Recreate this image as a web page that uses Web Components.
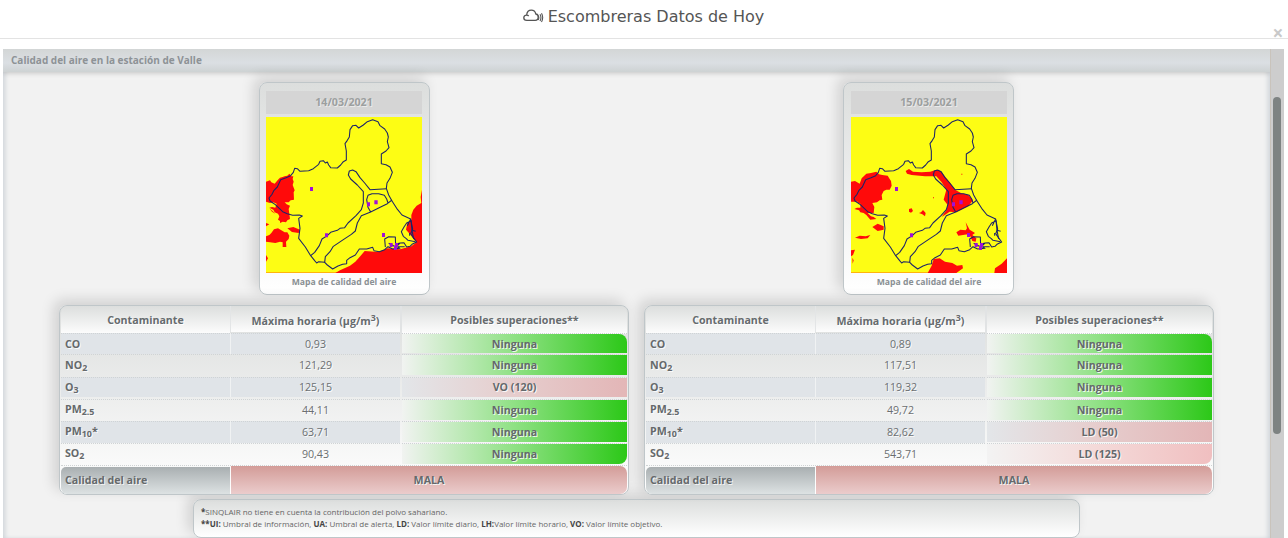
<!DOCTYPE html>
<html lang="es"><head><meta charset="utf-8"><title>Escombreras Datos de Hoy</title>
<style>
html,body{margin:0;height:100%;overflow:hidden;background:#fff}
body{font:10.67px "Open Sans","Noto Sans",sans-serif;color:#666}
</style></head><body>
<aq-dialog>
  <span slot="title">Escombreras Datos de Hoy</span>
  <aq-panel>
    <span slot="heading">Calidad del aire en la estación de Valle</span>
    <aq-columns>
      <aq-day date="14/03/2021" map="a">
        <aq-row h="21" label="CO" value="0,93" first>Ninguna</aq-row>
        <aq-row h="23" end="2" label="NO" sub="2" value="121,29">Ninguna</aq-row>
        <aq-row h="22" end="2" label="O" sub="3" value="125,15" tone="pink" odd up>VO (120)</aq-row>
        <aq-row h="22" label="PM" sub="2.5" value="44,11">Ninguna</aq-row>
        <aq-row h="22" label="PM" sub="10" star value="63,71" odd>Ninguna</aq-row>
        <aq-row h="22" label="SO" sub="2" value="90,43" last>Ninguna</aq-row>
      </aq-day>
      <aq-day date="15/03/2021" map="b">
        <aq-row h="21" label="CO" value="0,89" first>Ninguna</aq-row>
        <aq-row h="23" end="2" label="NO" sub="2" value="117,51">Ninguna</aq-row>
        <aq-row h="22" end="2" label="O" sub="3" value="119,32" odd up>Ninguna</aq-row>
        <aq-row h="22" label="PM" sub="2.5" value="49,72">Ninguna</aq-row>
        <aq-row h="22" label="PM" sub="10" star value="82,62" tone="pink" odd>LD (50)</aq-row>
        <aq-row h="22" label="SO" sub="2" value="543,71" tone="rose" last>LD (125)</aq-row>
      </aq-day>
    </aq-columns>
    <aq-note></aq-note>
  </aq-panel>
</aq-dialog>
<script>
const define=(name,render)=>customElements.define(name,class extends HTMLElement{
  connectedCallback(){ if(!this.shadowRoot) this.attachShadow({mode:'open'}).innerHTML=render(this); }
});

define('aq-dialog',()=>`<style>
:host{display:flex;flex-direction:column;height:538px;width:1288px;overflow:hidden;position:relative}
header{height:38px;flex:none;border-bottom:1px solid #e3e3e3;display:flex;justify-content:center;font:16px/34px "DejaVu Sans",sans-serif;color:#555;padding-right:2px;box-sizing:content-box}
header svg{width:21px;height:14px;margin:9px 4px 0 1px;flex:none}
.close{position:absolute;right:3px;top:24px;width:14px;height:19px;font:700 19px/19px "Open Sans",sans-serif;color:#c9c9c9;text-align:center}
.body{display:flex;flex:1;min-height:0;margin:10px 4px 0 3px}
.track{flex:none;width:13px;background:#cdcdcd;border-left:1px solid #c9c3bb}
.thumb{width:8px;height:337px;margin:48px 0 0 2px;border-radius:4px;background:#7e8382}
::slotted(aq-panel){flex:1;min-width:0}
</style><header><svg viewBox="0 0 21 14" fill="none" stroke="#555" stroke-width="1.3"><path d="M3.8 11.4C1.8 11.4.8 10.2.8 8.8C.8 7.1 2 6.2 3.6 6.1C4 3 5.900 1.200 8.300 1.200C10.700 1.200 12.300 2.700 12.800 5C14.500 5.100 15.200 6.400 15.200 8C15.200 10.100 14.200 11.400 12.200 11.400ZM3.600 6.100C4.500 6 5.200 6.400 5.700 7"/><path d="M15.200 6.400Q16.500 8.700 15.200 11M17 5.300Q18.900 8.700 17 12M18.500 4.300Q20.900 8.500 18.500 13" stroke-width="1.100"/></svg><slot name="title"></slot></header>
<div class="close">×</div><div class="body"><slot></slot><div class="track"><div class="thumb"></div></div></div>`);

define('aq-panel',()=>`<style>
:host{display:block;background:#f2f2f2;box-shadow:inset 4px 0 5px -2px #cdd3d8,inset -4px 0 5px -2px #cdd3d8;height:489px;overflow:hidden}
.h{height:23px;padding-left:8px;font:700 10px/23px "Open Sans",sans-serif;color:#8d9296;background:linear-gradient(#d3d6d6,#dbdfe3 60%,#cdd2d3);box-shadow:0 1px 5px rgba(0,0,0,.2);white-space:nowrap}
</style><div class="h"><slot name="heading"></slot></div><slot></slot>`);

define('aq-columns',()=>`<style>:host{display:grid;grid-template-columns:570px 570px;column-gap:15px;margin:10px 0 0 56px}</style><slot></slot>`);

define('aq-day',e=>`<style>
:host{display:block}
.card,.tbl{box-sizing:border-box;border:1px solid #bfc6c9;border-radius:8px;background:linear-gradient(#dcdedd,#fff);box-shadow:-5px -5px 14px rgba(0,0,0,.14)}
.card{width:171px;height:213px;margin-left:${e.getAttribute('map')=='a'?200:199}px;padding:8px 0 0 ${e.getAttribute('map')=='a'?6:7}px}
.date{width:156px;height:23px;background:#d5d5d5;text-align:center;font:700 10.67px/22px "Open Sans",sans-serif;color:#9c9f9f;text-shadow:1px 1px #eaeaea;margin-bottom:3px}
.cap{width:156px;text-align:center;font:700 8.64px/18px "Open Sans",sans-serif;color:#8a9094}
.tbl{margin-top:10px;height:190px;padding:0 1px;background:linear-gradient(#dcdedd,#fff)}
.th{display:grid;grid-template-columns:169px 169px 225px;column-gap:1px;height:26px;margin-bottom:1px;font:700 10.67px/28px "Open Sans",sans-serif;color:#666b6e;text-align:center;text-shadow:1px 1px #fff;white-space:nowrap}
.th>*{background:linear-gradient(#dcdedd,#fdfdfd)}
.th>:nth-child(1){border-radius:7px 0 0 0}
.th>:nth-child(2){padding-top:1px;box-sizing:border-box;height:26px;box-shadow:-1px 0 #e3e5e6}
.th>:nth-child(3){margin-left:1px;margin-right:-1px;border-radius:0 7px 0 0;box-shadow:-2px 0 #e1e3e4}
sup{font-size:8.9px;line-height:0;vertical-align:4px}
.foot{display:grid;grid-template-columns:169px 396px;column-gap:1px;height:28px;box-sizing:border-box;border-top:1px dotted #cfd3d4;font:700 10.67px/28px "Open Sans",sans-serif;color:#65696b;text-shadow:1px 1px #f3f3f3}
.foot>:first-child{padding-left:4px;margin-top:1px;line-height:26px;border-radius:5px 0 0 6px;background:linear-gradient(#a9afb1,#dde2e3)}
.foot>:last-child{text-align:center;border-radius:0 7px 7px 0;background:linear-gradient(#d39c98,#ebcccc)}
</style>
<div class="card"><div class="date">${e.getAttribute('date')}</div><aq-map kind="${e.getAttribute('map')}"></aq-map><div class="cap">Mapa de calidad del aire</div></div>
<div class="tbl"><div class="th"><div>Contaminante</div><div>Máxima horaria (µg/m<sup>3</sup>)</div><div>Posibles superaciones**</div></div>
<slot></slot><div class="foot"><div>Calidad del aire</div><div>MALA</div></div></div>`);

define('aq-row',e=>{
  const a=n=>e.getAttribute(n)||'', odd=e.hasAttribute('odd')||e.hasAttribute('first');
  const c={pink:'#e3e6e9,#e6cfcf 45%,#e3b6b7',rose:'#f3f3f3,#f4d9d8 50%,#f0bfc0'}[a('tone')]||'#f1f3f1,#8fe184 50%,#2cc818';
  const radius=e.hasAttribute('first')?'0 8px 0 0':e.hasAttribute('last')?'0 0 8px 0':'0';
  const up=e.hasAttribute('up')?18:20;
  return `<style>
:host{display:grid;grid-template-columns:169px 169px 225px;column-gap:1px;height:${a('h')}px;line-height:${up}px;color:#6b6f71;white-space:nowrap}
div{box-sizing:border-box;border-top:1px dotted #cfd3d5;text-shadow:1px 1px rgba(255,255,255,.85)}
.l,.v{${odd?'background:#e0e4e8;margin-bottom:'+(a('end')||'0')+'px;':''}}
.l{padding-left:4px;font-weight:700;color:#65696b;${e.hasAttribute('sub')&&!e.hasAttribute('up')&&a('h')=='22'?'line-height:19px;':''}}
.v{text-align:center;${odd?'box-shadow:-1px 0 #f0f2f3':''}}
.s{margin:0 -1px 0 1px;text-align:center;font-weight:700;color:#65696b}
.s span{display:block;height:${a('h')-1-(a('end')||1)}px;background:linear-gradient(90deg,${c});border-radius:${radius}}
sub{font-size:8.9px;line-height:0;vertical-align:-2px}
</style><div class="l">${a('label')}${a('sub')?`<sub>${a('sub')}</sub>`:''}${e.hasAttribute('star')?'*':''}</div><div class="v">${a('value')}</div><div class="s"><span><slot></slot></span></div>`;
});

/* Region of Murcia: shared outlines, with the polluted areas of each day beneath */
const areas={
a:`M48 320L60 316 64 322 74 326 84 314 90 308 98 306 104 304 112 302 118 296 124 304 130 304 128 312 131 320 128 330 134 346 131 352 132 374 122 376 116 382 104 382 110 388 120 392 116 402 118 416 120 432 112 436 108 442 98 440 90 444 90 438 84 434 88 424 84 416 74 412 70 404 58 398 66 396 76 398 80 386 70 382 60 384 48 380Z
M48 484L58 480 64 474 72 463 84 460 94 466 104 472 112 472 118 482 116 492 108 500 109 516 98 516 98 502 90 500 76 504 60 502 48 500Z M112 460L130 456 150 464 146 474 126 471Z M48 444L58 448 48 454Z M48 540L54 550 48 560ZM58 400L70 410 76 416 66 410Z
M516 344L512 366 514 384 500 392 490 404 484 420 484 434 472 444 468 464 480 478 492 494 500 502 484 514 450 523 412 520 385 531 344 528 332 542 316 560 300 572 270 586 256 594 516 594Z`,
b:`M48 320L60 318 74 326 80 310 94 296 108 294 124 290 132 298 142 300 158 302 164 312 168 318 170 332 164 344 154 344 146 348 140 360 142 374 134 376 126 382 112 384 118 396 116 414 98 414 108 424 116 426 124 432 106 434 94 420 86 414 76 412 72 406 58 402 66 398 76 398 76 386 68 384 70 380 48 380Z
M112 456L128 446 146 454 146 464 128 468ZM60 488L74 482 92 484 106 480 98 490 78 492ZM48 526L60 524 54 540 48 544ZM52 548l4 8-3 10zM222 402L230 400 234 408 228 413 222 410ZM252 414L258 412 264 405 272 414 270 424 262 418Z
M212 288L222 282 234 290 260 292 286 290 304 284 318 288 328 302 346 324 360 344 378 354 400 360 414 376 400 394 364 412 344 410 320 426 334 406 338 390 326 374 334 344 320 322 304 304 270 304 230 300 216 296Z
M364 472L376 464 392 466 396 460 392 442 404 464 420 474 412 480 424 490 422 500 412 498 406 484 398 478 370 482Z M278 594L290 572 296 552 314 550 330 560 352 564 366 572 382 570 384 580 364 594ZM478 594L480 580 500 566 516 550 516 594Z M379 296h3v3h-3zM294 367h3v3h-3z`};
define('aq-map',e=>`<style>:host{display:block;width:156px;height:156px}svg{display:block}</style>
<svg width="156" height="156" viewBox="48 126 468 468"><rect x="48" y="123" width="468" height="471" fill="#fdfd14"/>
<path d="M48 593H300" stroke="#ffa60a" stroke-width="3"/><path d="${areas[e.getAttribute('kind')]}" fill="#ff0a0a"/>
<g fill="none" stroke="#1c2468" stroke-width="3.2" stroke-linejoin="round"><path d="M57 369L66 358 72 346 82 336 92 314 108 308 122 302 130 292 134 280 142 281 150 289 176 287 190 281 206 268 210 259 220 257 226 264 232 261 236 270 242 278 262 279 272 270 280 260 289 255 289 228 285 206 292 196 298 186 300 164 308 152 318 151 326 159 340 150 352 140 368 134 384 140 390 152 404 162 412 174 415 186 412 200 417 218 408 228 394 237 394 266 408 269 420 276 427 292 420 310 411 324 409 340 416 360 426 378 440 400 456 420 482 432 488 462 482 476 492 490 500 501 486 508 480 514 470 516 462 503 450 504 440 514 450 520 428 522 414 515 404 524 388 530 372 527 368 517 350 522 328 522 316 540 300 548 290 556 290 566 278 568 264 573 248 582 232 570 224 562 206 560 200 564 194 557 182 542 166 516 146 490 150 460 146 430 157 423 148 420 128 421 112 416 98 410 76 389 60 378Z"/>
<path d="M182 542L194 532 208 512 216 492 232 482 242 472 262 466 270 460 284 458 294 444 318 422 334 404 340 384 340 350 322 330 302 312 295 300 298 288 308 285 318 290 330 308 344 324 360 344 410 341M224 562L226 545 240 530 250 514 280 494 304 478 316 468 322 444 334 422 362 411 392 396 412 386 426 375M362 411L354 397 350 374 354 361 366 356 386 356 403 361 410 372 414 384M406 516L404 492 416 485 436 486 437 512 448 504M482 438L470 444 462 456 454 470 460 484 468 490 474 496 496 500M482 432L472 452M479 474v8M483 436L486 466 497 469M486 466L491 492M416 505L436 515 464 515"/></g>
<g fill="#a010d8"><path d="M180 336h9v12h-9zM225 475h9v12h-9zM396 474h9v12h-9zM351 382h9v12h-9zM373 376h10v12h-10zM419 504h9v12h-9zM435 504h9v12h-9zM432 512h9v13h-9z"/></g></svg>`);

define('aq-note',()=>`<style>
:host{display:block;box-sizing:border-box;width:887px;height:39px;margin:4px 0 0 190px;padding:6px 7px 0;border:1px solid #bfc6c9;border-radius:8px;background:linear-gradient(#dcdedd,#fff);box-shadow:-5px -5px 14px rgba(0,0,0,.14);font:8px/12px "Open Sans",sans-serif;color:#666;white-space:nowrap}
b{color:#444}
</style><div><b>*</b>SINQLAIR no tiene en cuenta la contribución del polvo sahariano.</div>
<div><b>**UI:</b> Umbral de información, <b>UA:</b> Umbral de alerta, <b>LD:</b> Valor límite diario, <b>LH:</b>Valor límite horario, <b>VO:</b> Valor límite objetivo.</div>`);
</script></body></html>
